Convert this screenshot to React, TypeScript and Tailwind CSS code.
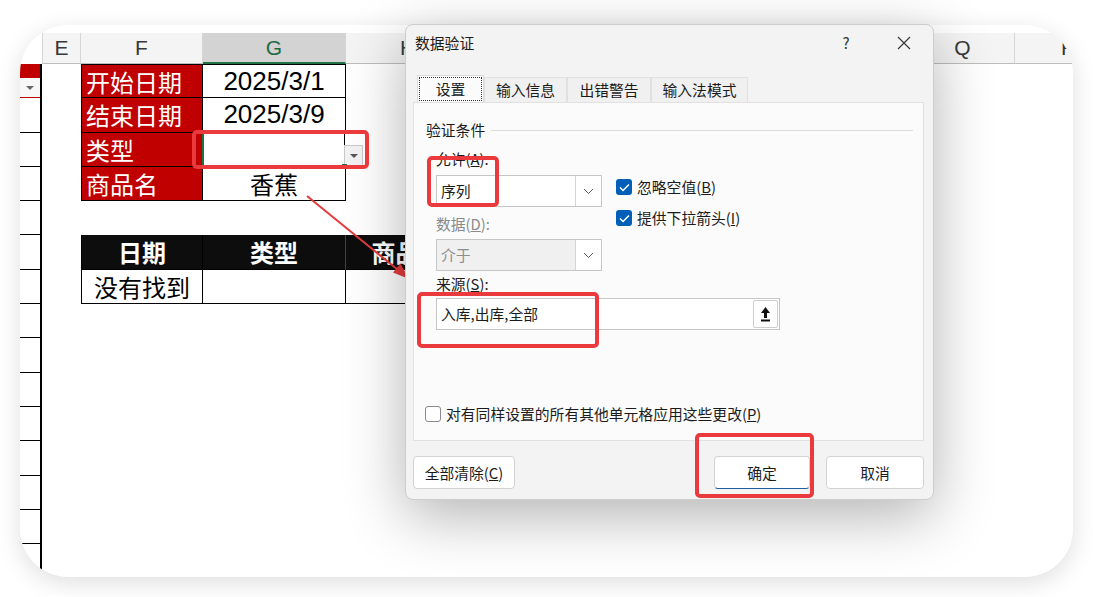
import React from 'react';

const RED = 'bg-[#c00000]';

const Chevron = () => (
  <svg width="11" height="7" viewBox="0 0 11 7" fill="none">
    <path d="M1 1l4.5 4.5L10 1" stroke="#5c5c5c" strokeWidth="1" />
  </svg>
);

const CheckBox = ({ checked, label }: { checked?: boolean; label: React.ReactNode }) => (
  <div className="flex h-[20px] items-center">
    {checked ? (
      <span className="flex h-[16px] w-[16px] items-center justify-center rounded-[3px] bg-[#005fb8]">
        <svg width="11" height="9" viewBox="0 0 11 9" fill="none">
          <path d="M1 4.6l3 3L10 1.4" stroke="white" strokeWidth="1.4" />
        </svg>
      </span>
    ) : (
      <span className="h-[16px] w-[16px] rounded-[3px] border border-[#8a8a8a] bg-white" />
    )}
    <span className="ml-[5px]">{label}</span>
  </div>
);

const Select = ({ value, disabled }: { value: string; disabled?: boolean }) => (
  <div
    className={
      'flex h-[32px] w-[166px] items-center border border-[#c6c6c6] ' +
      (disabled ? 'bg-[#f0f0f0] text-[#8d8d8d]' : 'bg-white')
    }
  >
    <span className="flex-1 pl-[4px]">{value}</span>
    <span className="flex h-full w-[26px] items-center justify-center border-l border-[#d4d4d4] bg-white">
      <Chevron />
    </span>
  </div>
);

const Mark = ({ className }: { className: string }) => (
  <div className={'absolute rounded-[5px] border-[4px] border-[#eb3a3d] ' + className} />
);

function HeaderRow() {
  const cell = 'flex shrink-0 items-center justify-center border-r border-[#d6d6d6]';
  return (
    <div className="flex h-[31px] [font-family:'Liberation_Sans',sans-serif] text-[21px] text-[#383838]">
      <div className="w-[22px] shrink-0 bg-white" />
      <div className={cell + ' w-[39px] border-l border-b border-b-[#bdbdbd] bg-[#f4f4f4]'}>E</div>
      <div className={cell + ' w-[122px] border-b border-b-[#bdbdbd] bg-[#f4f4f4]'}>F</div>
      <div className={cell + ' w-[143px] border-b-2 border-b-[#217346] bg-[#d3d3d3] text-[#1f6b40]'}>G</div>
      <div className={cell + ' w-[124px] border-b border-b-[#bdbdbd] bg-[#f4f4f4]'}>H</div>
      <div className="w-[441px] shrink-0 border-b border-[#bdbdbd] bg-[#f4f4f4]" />
      <div className={cell + ' w-[104px] border-b border-b-[#bdbdbd] bg-[#f4f4f4]'}>Q</div>
      <div className="flex flex-1 items-center border-b border-[#bdbdbd] bg-[#f4f4f4] pl-[46px]">R</div>
    </div>
  );
}

const Strip = () => <div className="w-[22px] shrink-0 border-b border-r-2 border-black" />;

function Sheet() {
  const f = 'w-[122px] shrink-0 border-x border-b border-black';
  const g = 'w-[143px] shrink-0 border-r border-b border-black';
  const h = 'w-[124px] shrink-0 border-r border-b border-black';
  const row = 'flex h-[34.3px] text-[24px] leading-[33px]';
  const num = "[font-family:'Liberation_Sans',sans-serif] text-[26px]";
  return (
    <div className="flex h-full flex-col">
      <HeaderRow />
      {/* row 1 */}
      <div className={row}>
        <div className="flex w-[22px] shrink-0 flex-col border-r-2 border-black">
          <div className={'h-[14px] ' + RED} />
          <div className="flex flex-1 items-center justify-end border-b border-[#c00000] bg-[#f7f7f7] pr-[6px]">
            <span className="border-x-[4px] border-t-[4px] border-x-transparent border-t-[#666]" />
          </div>
        </div>
        <div className="w-[39px] shrink-0" />
        <div className={f + ' border-t pl-[4px] text-white ' + RED}>开始日期</div>
        <div className={g + ' border-t text-center ' + num}>2025/3/1</div>
      </div>
      {/* row 2 */}
      <div className={row}>
        <Strip />
        <div className="w-[39px] shrink-0" />
        <div className={f + ' pl-[4px] text-white ' + RED}>结束日期</div>
        <div className={g + ' text-center ' + num}>2025/3/9</div>
      </div>
      {/* row 3 */}
      <div className={row}>
        <Strip />
        <div className="w-[39px] shrink-0" />
        <div className={f + ' pl-[4px] text-white ' + RED}>类型</div>
        <div className={g + ' relative border-l-2 border-l-[#1e7145] border-t border-t-[#1e7145] -ml-px'}>
          <div className="absolute left-full top-[11px] flex h-[23px] w-[19px] items-center justify-center border border-[#c9c9c9] bg-[#f2f2f2]">
            <span className="border-x-[4px] border-t-[4px] border-x-transparent border-t-[#555]" />
          </div>
          <div className="absolute -bottom-[3px] -right-[3px] h-[5px] w-[5px] bg-[#1e7145]" />
        </div>
      </div>
      {/* row 4 */}
      <div className={row}>
        <Strip />
        <div className="w-[39px] shrink-0" />
        <div className={f + ' pl-[4px] text-white ' + RED}>商品名</div>
        <div className={g + ' text-center'}>香蕉</div>
      </div>
      {/* row 5 */}
      <div className={row}>
        <Strip />
      </div>
      {/* row 6 */}
      <div className={row + ' font-bold text-white'}>
        <Strip />
        <div className="w-[39px] shrink-0" />
        <div className={f + ' bg-[#0d0d0d] text-center'}>日期</div>
        <div className="w-[143px] shrink-0 border-r border-r-[#444] border-b border-black bg-[#0d0d0d] text-center">类型</div>
        <div className={h + ' bg-[#0d0d0d] text-center'}>商品名</div>
      </div>
      {/* row 7 */}
      <div className={row}>
        <Strip />
        <div className="w-[39px] shrink-0" />
        <div className={f + ' text-center'}>没有找到</div>
        <div className={g} />
        <div className={h} />
      </div>
      {Array.from({ length: 7 }).map((_, i) => (
        <div key={i} className={row}>
          <Strip />
        </div>
      ))}
      <div className="flex flex-1">
        <div className="w-[22px] shrink-0 border-r-2 border-black" />
      </div>
    </div>
  );
}

function Dialog() {
  const tab = 'flex h-[25px] shrink-0 items-center justify-center border border-b-0 border-[#e0e0e0] bg-[#f0f0f0]';
  const btn = 'flex h-[33px] items-center justify-center rounded-[4px] border border-[#d3d3d3] bg-white';
  return (
    <div className="absolute left-[385px] top-[-1px] h-[476px] w-[529px] rounded-[8px] border border-[#cdcdcd] bg-[#f3f3f3] text-[14.8px] leading-[20px] text-[#1b1b1b] shadow-[0_16px_60px_rgba(0,0,0,0.3)]">
      <div className="flex h-[36px] items-center pl-[9px]">
        <span>数据验证</span>
        <div className="ml-auto flex items-center">
          <span className="w-[58px] text-center text-[15px] text-[#333]">?</span>
          <span className="flex w-[58px] justify-center">
            <svg width="14" height="14" viewBox="0 0 14 14">
              <path d="M1 1l12 12M13 1L1 13" stroke="#333" strokeWidth="1.1" />
            </svg>
          </span>
        </div>
      </div>
      <div className="ml-[7px] mr-[9px] mt-[14px]">
        <div className="flex h-[27px] items-end pl-[4px]">
          <div className="h-[27px] w-[67px] shrink-0 border border-b-0 border-[#dcdcdc] bg-[#fbfbfb] p-[1px]">
            <div className="flex h-full items-center justify-center border border-dotted border-[#333]">设置</div>
          </div>
          <div className={tab + ' w-[83px]'}>输入信息</div>
          <div className={tab + ' w-[84px]'}>出错警告</div>
          <div className={tab + ' w-[97px]'}>输入法模式</div>
        </div>
        <div className="h-[339px] border border-[#e1e1e1] bg-[#fbfbfb] pl-[12px] pr-[10px] pt-[17px]">
          <div className="flex items-center">
            <span>验证条件</span>
            <div className="ml-[6px] h-px flex-1 bg-[#dcdcdc]" />
          </div>
          <div className="flex pl-[10px]">
            <div className="w-[166px] shrink-0">
              <div className="mt-[9px]">允许(<u>A</u>):</div>
              <div className="mt-[6px]">
                <Select value="序列" />
              </div>
              <div className="mt-[7px] text-[#8a8a8a]">数据(<u>D</u>):</div>
              <div className="mt-[5px]">
                <Select value="介于" disabled />
              </div>
            </div>
            <div className="ml-[14px] mt-[37px] flex flex-col gap-[11px]">
              <CheckBox checked label={<>忽略空值(<u>B</u>)</>} />
              <CheckBox checked label={<>提供下拉箭头(<u>I</u>)</>} />
            </div>
          </div>
          <div className="pl-[10px]">
            <div className="mt-[3px]">来源(<u>S</u>):</div>
            <div className="mt-[4px] flex h-[32px] w-[344px] items-center border border-[#c6c6c6] bg-white pl-[4px]">
              <span className="flex-1">入库,出库,全部</span>
              <span className="mr-[1px] flex h-[28px] w-[25px] items-center justify-center rounded-[2px] border border-[#cfcfcf] bg-white">
                <svg width="11" height="16" viewBox="0 0 11 16">
                  <path d="M5.5 1L10 7H7v5H4V7H1z" fill="#111" />
                  <rect x="1" y="13.5" width="9" height="2" fill="#111" />
                </svg>
              </span>
            </div>
          </div>
          <div className="ml-[-1px] mt-[74px]">
            <CheckBox label={<>对有同样设置的所有其他单元格应用这些更改(<u>P</u>)</>} />
          </div>
        </div>
      </div>
      <div className="mt-[15px] flex pl-[7px] pr-[9px]">
        <div className={btn + ' w-[102px]'}>全部清除(<u>C</u>)</div>
        <div className={btn + ' ml-auto w-[96px] border-[#6f8fb0] border-b-[#1f5fa0]'}>确定</div>
        <div className={btn + ' ml-[16px] w-[98px]'}>取消</div>
      </div>
    </div>
  );
}

export default function App() {
  return (
    <div className="h-[597px] w-[1093px] overflow-hidden bg-white pt-[25px] [font-family:'Noto_Sans_CJK_SC',sans-serif]">
      <div className="relative ml-[20px] h-[552px] w-[1053px]">
        <div className="h-full overflow-hidden rounded-[48px] bg-white pt-[8px] shadow-[0_6px_24px_rgba(0,0,0,0.13)]">
          <Sheet />
        </div>
        <svg className="pointer-events-none absolute left-0 top-0" width="1053" height="552">
          <line x1="287" y1="171" x2="383" y2="249" stroke="#e53b3b" strokeWidth="2" />
          <polygon points="389,254 373,247.5 380.5,238.5" fill="#e53b3b" />
        </svg>
        <Dialog />
        <Mark className="left-[172px] top-[105px] h-[39px] w-[177px]" />
        <Mark className="left-[407px] top-[131px] h-[51px] w-[72px]" />
        <Mark className="left-[397px] top-[267px] h-[56px] w-[182px]" />
        <Mark className="left-[675px] top-[408px] h-[65px] w-[119px]" />
      </div>
    </div>
  );
}
